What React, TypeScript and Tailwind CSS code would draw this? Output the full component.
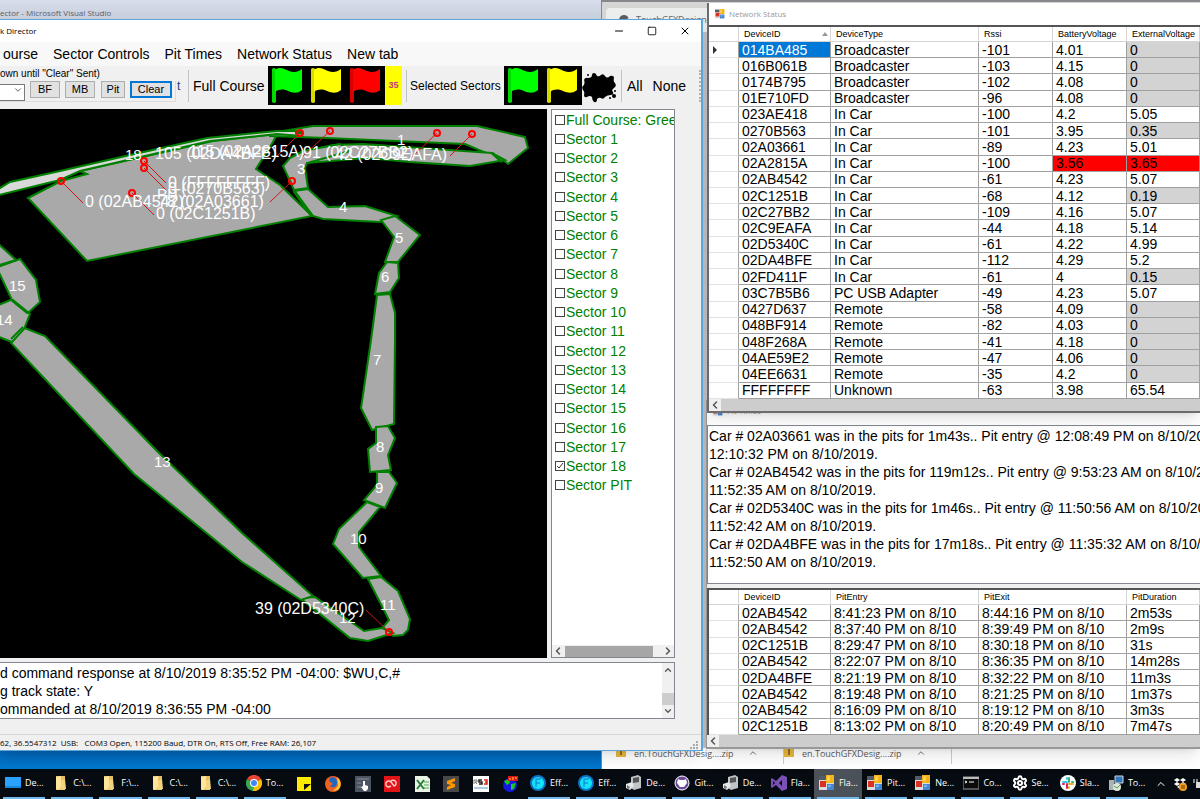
import { useState, type ReactNode } from "react";
import { ChevronDown, ChevronLeft, ChevronRight, ChevronUp, Minus, Settings, Square, X } from "lucide-react";
import clsx from "clsx";

type Device = [id: string, type: string, rssi: string, battery: string, external: string];

const devices: Device[] = [
  ["014BA485", "Broadcaster", "-101", "4.01", "0"],
  ["016B061B", "Broadcaster", "-103", "4.15", "0"],
  ["0174B795", "Broadcaster", "-102", "4.08", "0"],
  ["01E710FD", "Broadcaster", "-96", "4.08", "0"],
  ["023AE418", "In Car", "-100", "4.2", "5.05"],
  ["0270B563", "In Car", "-101", "3.95", "0.35"],
  ["02A03661", "In Car", "-89", "4.23", "5.01"],
  ["02A2815A", "In Car", "-100", "3.56", "3.65"],
  ["02AB4542", "In Car", "-61", "4.23", "5.07"],
  ["02C1251B", "In Car", "-68", "4.12", "0.19"],
  ["02C27BB2", "In Car", "-109", "4.16", "5.07"],
  ["02C9EAFA", "In Car", "-44", "4.18", "5.14"],
  ["02D5340C", "In Car", "-61", "4.22", "4.99"],
  ["02DA4BFE", "In Car", "-112", "4.29", "5.2"],
  ["02FD411F", "In Car", "-61", "4", "0.15"],
  ["03C7B5B6", "PC USB Adapter", "-49", "4.23", "5.07"],
  ["0427D637", "Remote", "-58", "4.09", "0"],
  ["048BF914", "Remote", "-82", "4.03", "0"],
  ["048F268A", "Remote", "-41", "4.18", "0"],
  ["04AE59E2", "Remote", "-47", "4.06", "0"],
  ["04EE6631", "Remote", "-35", "4.2", "0"],
  ["FFFFFFFF", "Unknown", "-63", "3.98", "65.54"],
];

const pitStops = [
  ["02AB4542", "8:41:23 PM on 8/10", "8:44:16 PM on 8/10", "2m53s"],
  ["02AB4542", "8:37:40 PM on 8/10", "8:39:49 PM on 8/10", "2m9s"],
  ["02C1251B", "8:29:47 PM on 8/10", "8:30:18 PM on 8/10", "31s"],
  ["02AB4542", "8:22:07 PM on 8/10", "8:36:35 PM on 8/10", "14m28s"],
  ["02DA4BFE", "8:21:19 PM on 8/10", "8:32:22 PM on 8/10", "11m3s"],
  ["02AB4542", "8:19:48 PM on 8/10", "8:21:25 PM on 8/10", "1m37s"],
  ["02AB4542", "8:16:09 PM on 8/10", "8:19:12 PM on 8/10", "3m3s"],
  ["02C1251B", "8:13:02 PM on 8/10", "8:20:49 PM on 8/10", "7m47s"],
];

const pitMessages = `Car # 02A03661 was in the pits for 1m43s.. Pit entry @ 12:08:49 PM on 8/10/2019
12:10:32 PM on 8/10/2019.
Car # 02AB4542 was in the pits for 119m12s.. Pit entry @ 9:53:23 AM on 8/10/2019
11:52:35 AM on 8/10/2019.
Car # 02D5340C was in the pits for 1m46s.. Pit entry @ 11:50:56 AM on 8/10/2019
11:52:42 AM on 8/10/2019.
Car # 02DA4BFE was in the pits for 17m18s.. Pit entry @ 11:35:32 AM on 8/10/2019
11:52:50 AM on 8/10/2019.`;

const logText = `d command response at 8/10/2019 8:35:52 PM -04:00: $WU,C,#
g track state: Y
ommanded at 8/10/2019 8:36:55 PM -04:00`;

const sectorNames = [
  "Full Course: Green",
  ...Array.from({ length: 18 }, (_, i) => `Sector ${i + 1}`),
  "Sector PIT",
];

const trackShapes = [
  "28,198 61,181 87,174 80,171 213,141 277,134 273,142 256,169 280,185 312,216 87,261",
  "327,138 270,136 270,133 313,126 477,126 525,137 528,148 508,164 503,160 465,144",
  "303,152 333,145 363,144 492,153 505,160 470,166 410,162 367,158 307,163",
  "283,166 290,158 303,151 340,144 350,151 307,163 305,168 308,188 294,190",
  "294,191 308,189 328,207 365,206 397,216 380,222 323,219 313,216",
  "395,216 420,235 398,262 385,262 394,237 381,220",
  "387,262 398,263 399,278 390,292 375,294 379,273",
  "377,295 390,294 395,313 395,340 394,424 372,430 361,408 371,340",
  "376,427 388,426 395,438 388,455 391,470 370,472 368,449 376,443",
  "377,472 389,472 397,483 385,508 364,500 377,485",
  "367,502 380,507 359,532 359,547 381,576 363,578 333,544 339,529",
  "368,579 381,577 398,591 410,619 408,630 403,635 393,636 388,632 383,627 389,620",
  "300,598 315,597 364,631 382,628 393,633 368,641 350,638",
  "22,327 45,336 158,452 242,533 313,596 301,600 242,562 134,474 11,343",
  "-9,308 13,299 30,314 24,329 12,342 -9,334",
  "-5,268 20,259 36,280 40,302 28,313 12,300 -5,264",
  "-8,238 16,260 -8,267",
];

const trackLabels: [string, number, number][] = [
  ["18", 125, 160], ["1", 397, 145], ["3", 297, 174], ["4", 339, 212], ["5", 395, 243],
  ["6", 381, 282], ["7", 373, 365], ["8", 376, 452], ["9", 375, 493], ["10", 350, 544],
  ["11", 380, 610], ["12", 339, 623], ["13", 154, 467], ["14", -4, 325], ["15", 9, 291],
  ["PIT", 157, 199],
];

const cars: [string, number, number, number, number][] = [
  // label, label x/y, marker x/y
  ["105 (02DA4BFE)", 155, 159, 330, 131],
  ["115 (02A2815A)", 189, 157, 300, 133],
  ["91 (02C27BB2)", 303, 158, 437, 133],
  ["42 (02C9EAFA)", 335, 160, 472, 134],
  ["0 (FFFFFFFF)", 168, 188, 144, 161],
  ["0 (0270B563)", 168, 194, 144, 168],
  ["78 (02A03661)", 158, 207, 292, 181],
  ["0 (02AB4542)", 85, 207, 61, 181],
  ["0 (02C1251B)", 156, 219, 132, 193],
  ["39 (02D5340C)", 255, 614, 389, 632],
];

const leaders = [
  "300,133 277,156", "330,131 302,157", "437,133 411,158", "472,134 450,156", "144,161 166,183",
  "144,168 166,190", "292,181 270,202", "61,181 83,203", "132,193 154,215", "389,632 366,610",
];

function TrackMap() {
  return (
    <svg viewBox="0 109 547 548" preserveAspectRatio="xMinYMin meet" className="h-full w-full" aria-label="Track map">
      <g fill="#a9a9a9" stroke="#008000" strokeWidth="2">
        {trackShapes.map((points) => <polygon key={points} points={points} />)}
        <polygon fill="#d9d9d9" points="-5,191 10,182 60,171 130,155 207,138 277,131 302,131 302,136 277,134 210,141 80,171 60,180 -5,196" />
      </g>
      <path d="M294 191l18 25M295 133h8M492 153l10 9M12 300l16 13" stroke="#008000" strokeWidth="3" />
      <path d="M11 339l12-12" stroke="#008000" strokeWidth="2" />
      <g fill="none" stroke="#d01818" strokeWidth="1">
        {leaders.map((points) => <polyline key={points} points={points} />)}
      </g>
      <g fill="none" stroke="#ff0000" strokeWidth="2">
        {cars.map(([label, , , x, y]) => <circle key={label} cx={x} cy={y} r="3" />)}
      </g>
      <g fill="#ffffff" className="font-['Liberation_Sans',sans-serif]">
        {trackLabels.map(([label, x, y]) => <text key={label} x={x} y={y} fontSize="15">{label}</text>)}
        {cars.map(([label, x, y]) => <text key={label} x={x} y={y} fontSize="16">{label}</text>)}
      </g>
    </svg>
  );
}

function Flag({ color, label }: { color: string; label: string }) {
  return (
    <button type="button" aria-label={label} className="h-[39px] w-[39px] bg-black">
      <svg viewBox="0 0 39 39" className="size-full">
        <path d="M4 3q2-2 4 0v33q-2 2-4 0z" fill={color} opacity=".85" />
        <path d="M7 4c5-4 9-1 14 1s9 1 13-2v21c-5 4-9 3-14 1s-9-2-13 1z" fill={color} />
      </svg>
    </button>
  );
}

function FormIcon({ className }: { className?: string }) {
  return (
    <svg viewBox="0 0 16 16" className={className}>
      <path fill="#d8dbe0" d="M0 1h15v14H0z" />
      <path fill="#555b66" d="M0 1h7v4H0z" />
      <path fill="#f7b417" d="M7 0h8v8H7z" />
      <path fill="#d8321f" d="M1 6h6v6H1z" />
      <path fill="#4386d8" d="M8 9h7v6H8z" />
      <path fill="#fbd05a" d="M8 1h3v5H8z" />
      <path fill="#7fb0ee" d="M9 10h3v2H9z" />
    </svg>
  );
}

function FolderIcon() {
  return (
    <svg viewBox="0 0 16 16" className="size-4">
      <path fill="#e8bf62" d="M3 1h9v14H3z" />
      <path fill="#ffe49c" d="M3 2l5-1v11l-2 3-3-1z" />
      <path fill="#f4d57f" d="M8 6l4-2 1 10-5 1z" />
    </svg>
  );
}

function ChromeIcon() {
  return (
    <svg viewBox="0 0 16 16" className="size-4">
      <path fill="#ea4335" d="M8 8L1 4a8 8 0 0 1 14 0z" />
      <path fill="#34a853" d="M8 8L1 4a8 8 0 0 0 6 12z" />
      <path fill="#fbbc05" d="M8 8l7-4a8 8 0 0 1-8 12z" />
      <circle cx="8" cy="8" r="4" fill="#fff" />
      <circle cx="8" cy="8" r="3" fill="#4285f4" />
    </svg>
  );
}

function EffIcon() {
  return (
    <svg viewBox="0 0 16 16" className="size-4">
      <circle cx="8" cy="8" r="8" fill="#1173c7" />
      <circle cx="8" cy="8" r="6" fill="#12e5fb" />
      <path d="M6 4h5M6 4v8M6 8h4" stroke="#1173c7" fill="none" />
    </svg>
  );
}

function DeviceIcon() {
  return (
    <svg viewBox="0 0 16 16" className="size-4">
      <path fill="#bfc4c6" d="M5 2l7-2 3 2v11l-7 2-3-2z" />
      <path fill="#555" d="M7 3l6-1v5l-6 1z" />
      <path fill="#e5e7e8" d="M0 9l6-2 2 4-4 4-4-2z" />
      <path fill="#777" d="M1 10l3 2-1 2-2-1z" />
    </svg>
  );
}

const desktopIcon = <svg viewBox="0 0 16 16" className="size-4"><path fill="#29a3ff" d="M0 2h16v11H0z" /><path d="M0 12h16" stroke="#0866b4" /></svg>;
const consoleIcon = <svg viewBox="0 0 16 16" className="size-4"><path fill="#0b0b0b" stroke="#999" d="M0 2h16v12H0z" /><path fill="#bbb" d="M0 2h16v2H0z" /><path d="M2 6l2 1-2 1M6 7h5" stroke="#fff" fill="none" /></svg>;
const gitIcon = <svg viewBox="0 0 16 16" className="size-4"><circle cx="8" cy="8" r="7" fill="#6d4a9c" stroke="#fff" /><path fill="#fff" d="M4 4l2 1h4l2-1 1 4-3 4H6L3 8z" /></svg>;
const vsIcon = <svg viewBox="0 0 16 16" className="size-4"><path fill="#7a50b5" fillRule="evenodd" d="M11 0l5 2v12l-5 2-6-6-4 3-1-1V4l1-1 4 3zm0 5L8 8l3 3zM2 6v4l2-2z" /></svg>;
const slackIcon = <svg viewBox="0 0 16 16" className="size-4"><circle cx="8" cy="8" r="8" fill="#fff" /><g strokeWidth="2" strokeLinecap="round"><path d="M3 7h4M7 3v1" stroke="#36c5f0" /><path d="M9 3v4M12 7h1" stroke="#2eb67d" /><path d="M9 9h4M9 12v1" stroke="#ecb22e" /><path d="M7 9v4M3 9h1" stroke="#e01e5a" /></g></svg>;
const setupIcon = <svg viewBox="0 0 16 16" className="size-4"><path fill="#3278b8" stroke="#c8d6df" d="M7 1h8v7H7z" /><path fill="#aab2b5" d="M1 5h5v10H1z" /><circle cx="9" cy="12" r="4" fill="#dfe7da" /><path d="M6 11l3 2 3-3" stroke="#4d9d48" fill="none" /></svg>;

const pinned: { name: string; icon: ReactNode }[] = [
  { name: "Sticky Notes", icon: <svg viewBox="0 0 16 16" className="size-4"><path fill="#ffec00" d="M1 1h14v14H1z" /><path fill="#111" d="M8 8h7l-7 6z" /></svg> },
  { name: "Firefox", icon: <svg viewBox="0 0 16 16" className="size-4"><circle cx="8" cy="8" r="8" fill="#f0611f" /><path fill="#ffc532" d="M12 1c4 3 5 9 1 13l-5 1 5-5z" /><path fill="#2168c5" d="M5 2c4-2 8 1 7 6-1 4-5 4-7 2l3-2-4-3z" /></svg> },
  { name: "Touch", icon: <svg viewBox="0 0 16 16" className="size-4"><path fill="#4b5260" d="M0 0h16v16H0z" /><path d="M2 3h12M2 7h4M2 11h4" stroke="#8a8fa0" /><path fill="#fff" d="M8 5h2v4l3 1v3l-2 2H9l-3-4 2-1z" /></svg> },
  { name: "Creative Cloud", icon: <svg viewBox="0 0 16 16" className="size-4"><path fill="#e01418" d="M0 0h16v16H0z" /><path d="M7 10l-2 1a3 3 0 1 1 2-5l3 4a3 3 0 1 0-3-5" stroke="#ffc7c7" strokeWidth="1.5" fill="none" /></svg> },
  { name: "Excel", icon: <svg viewBox="0 0 16 16" className="size-4"><path fill="#e9f4e6" d="M1 0h12l3 3v13H1z" /><path d="M10 6h5M10 9h5M10 12h5" stroke="#55a55b" /><path d="M3 4l7 9M10 4l-7 9" stroke="#23823c" strokeWidth="2" /></svg> },
  { name: "Sublime Text", icon: <svg viewBox="0 0 16 16" className="size-4"><path fill="#484848" d="M0 0h16v16H0z" /><path fill="#ff9800" d="M4 5l8-3v3L8 7l4 1v3l-8 3v-3l4-2-4-1z" /></svg> },
  { name: "RS3", icon: <svg viewBox="0 0 16 16" className="size-4"><path fill="#fff" d="M0 0h16v16H0z" /><path d="M1 8V4h3v2H2l2 2" stroke="#777" fill="none" /><path d="M9 4H6v2h3v2H6" stroke="#222" fill="none" strokeWidth="1.5" /><path d="M11 4h3v4h-3M12 6h2" stroke="#d21" fill="none" strokeWidth="1.5" /><path d="M1 12h14" stroke="#5b94c9" /></svg> },
  { name: "World time", icon: <svg viewBox="0 0 16 16" className="size-4"><circle cx="8" cy="9" r="7" fill="#1418e0" /><path fill="#19c91f" d="M2 5l5-2 1 4-3 2zM9 8l5-1-2 6-3 1z" /><path fill="#d81717" d="M6 0h10v5H6z" /><path d="M8 2v2M11 1v3M13 2h2" stroke="#ffd23b" /></svg> },
];

const leftTasks = [
  { label: "De...", icon: desktopIcon },
  { label: "C:\\...", icon: <FolderIcon /> },
  { label: "F:\\...", icon: <FolderIcon /> },
  { label: "C:\\...", icon: <FolderIcon /> },
  { label: "C:\\...", icon: <FolderIcon /> },
  { label: "To...", icon: <ChromeIcon /> },
];

const rightTasks = [
  { label: "Eff...", icon: <EffIcon /> },
  { label: "Eff...", icon: <EffIcon /> },
  { label: "De...", icon: <DeviceIcon /> },
  { label: "Git...", icon: gitIcon },
  { label: "De...", icon: <DeviceIcon /> },
  { label: "Fla...", icon: vsIcon },
  { label: "Fla...", icon: <FormIcon className="size-4" />, active: true },
  { label: "Pit...", icon: <FormIcon className="size-4" /> },
  { label: "Ne...", icon: <FormIcon className="size-4" /> },
  { label: "Co...", icon: consoleIcon },
  { label: "Se...", icon: <Settings className="size-4 text-white" strokeWidth={3} /> },
  { label: "Sla...", icon: slackIcon },
  { label: "To...", icon: setupIcon },
];

function TaskButton({ label, icon, active }: { label: string; icon: ReactNode; active?: boolean }) {
  return (
    <button type="button" className={clsx("flex min-w-0 flex-1 flex-col px-[3px]", active && "bg-[#4a5158]")}>
      <span className="flex w-full flex-1 items-center gap-1 border-b-2 border-[#76b9ed] pl-0.5 whitespace-nowrap">
        <span className="shrink-0">{icon}</span>
        <span className="text-[9px] text-white">{label}</span>
      </span>
    </button>
  );
}

function Taskbar() {
  return (
    <footer className="grid h-[30px] shrink-0 grid-cols-[289fr_236fr_626fr_49fr] overflow-hidden bg-[#060b12]">
      <div className="flex min-w-0">
        {leftTasks.map((task, i) => <TaskButton key={i} {...task} />)}
      </div>
      <div className="flex min-w-0">
        {pinned.map(({ name, icon }) => (
          <button key={name} type="button" aria-label={name} className="flex flex-1 items-center justify-center">{icon}</button>
        ))}
      </div>
      <div className="flex min-w-0">
        {rightTasks.map((task, i) => <TaskButton key={i} {...task} />)}
      </div>
      <div className="flex min-w-0 items-center gap-1.5 overflow-hidden pl-1 text-white">
        <ChevronUp className="size-3 shrink-0" />
        <svg viewBox="0 0 14 14" className="size-3.5 shrink-0">
          <path fill="#fff" d="M1 3l3-2 3 2-3 2zM7 3l3-2 3 2-3 2zM1 7l3-2 3 2-3 2zM7 7l3-2 3 2-3 2zM4 10l3-2 3 2-3 2z" />
          <circle cx="10" cy="10" r="4" fill="#f5a11c" />
          <path d="M9 8v4M11 8v4" stroke="#5a3a05" />
        </svg>
        <svg viewBox="0 0 14 14" className="size-3.5 shrink-0"><path fill="#ddd" d="M3 5h11v6H3z" /><path d="M1 2v4M4 2v3" stroke="#fff" /></svg>
      </div>
    </footer>
  );
}

function Background() {
  return (
    <div className="absolute inset-0 flex bg-[#0078d7]">
      <div className="flex w-[601px] shrink-0 flex-col justify-between">
        <p className="h-[19px] overflow-hidden bg-linear-to-b from-[#d8deec] to-[#c6cddb] pt-2 text-[8px] leading-[10px] whitespace-nowrap text-[#5c6068]">
          ector - Microsoft Visual Studio
        </p>
        <div className="h-[18px] bg-linear-to-b from-[#0064b4] to-[#0078d0]" />
      </div>
      <div className="flex min-w-0 flex-1 flex-col justify-between border-t-2 border-l border-[#85878a] bg-[#bfc2c6]">
        <div className="flex h-[30px] bg-[#d5d5d6] pt-1.5 pl-1">
          <div className="flex items-center gap-1.5 rounded-t bg-[#eceded] px-3 text-[9px] text-[#61656a]">
            <svg viewBox="0 0 12 12" className="size-3"><circle cx="6" cy="6" r="5" fill="#585c61" /><path fill="#ddd" d="M6 6l5-2v4l-3 3z" /></svg>
            TouchGFXDesigner
          </div>
        </div>
        <div className="flex h-[21px] items-start bg-white pl-3.5 text-[9px] leading-[11px] text-[#5b5b5b]">
          {[0, 1].map((n) => (
            <button key={n} type="button" className="flex h-4 w-[168px] items-start gap-2 border-r border-[#ccc]">
              <svg viewBox="0 0 10 10" className="size-2.5"><path fill="#e6b83d" d="M0 0h10v9H0z" /><path fill="#9c6a20" d="M4 1h2v6H4z" /></svg>
              <span className="w-[106px] text-left whitespace-nowrap">en.TouchGFXDesig....zip</span>
              <ChevronUp className="size-2.5" />
            </button>
          ))}
        </div>
      </div>
    </div>
  );
}

const smallButton = "h-[17px] border border-[#adadad] bg-[#e1e1e1] text-[11px] leading-[15px] text-black";

function Toolbar() {
  return (
    <div className="flex h-[39px] items-center overflow-hidden bg-[#f0f0f0] text-sm whitespace-nowrap">
      <fieldset className="h-full w-[177px] shrink-0">
        <legend className="h-[15px] text-[10px] leading-[15px]">own until "Clear" Sent)</legend>
        <div className="mr-px flex h-[21px] items-start border-r border-b border-[#dcdcdc]">
          <div className="relative mr-[5px] h-[17px] w-[25px]">
            <select aria-label="Command" className="size-full appearance-none border-y border-r border-[#7a7a7a] bg-white text-[11px]">
              <option />
            </select>
            <ChevronDown className="pointer-events-none absolute top-1 right-0.5 size-2.5 text-[#444]" />
          </div>
          <button type="button" className={`${smallButton} mr-[5px] w-[30px]`}>BF</button>
          <button type="button" className={`${smallButton} mr-[6px] w-[30px]`}>MB</button>
          <button type="button" className={`${smallButton} mr-[5px] w-[24px]`}>Pit</button>
          <button type="button" className="h-[17px] w-[42px] border-2 border-[#0078d7] bg-[#e1e1e1] text-[11px] leading-[13px]">Clear</button>
        </div>
      </fieldset>
      <span className="w-[11px] shrink-0 text-xs text-[#1c3f78]">t</span>
      <div className="h-8 w-px shrink-0 bg-[#c4c4c4]" />
      <span className="w-[79px] shrink-0 pl-1">Full Course</span>
      <div className="flex shrink-0">
        <Flag color="#00ff00" label="Full course green" />
        <Flag color="#ffff00" label="Full course yellow" />
        <Flag color="#ff0000" label="Full course red" />
        <button type="button" className="w-[17px] bg-[#ffff00] text-[9px] font-bold text-[#c23a7c]">35</button>
      </div>
      <div className="ml-1 h-8 w-px shrink-0 bg-[#c4c4c4]" />
      <span className="w-[97px] shrink-0 pl-[3px] text-xs">Selected Sectors</span>
      <div className="flex shrink-0">
        <Flag color="#00ff00" label="Selected sectors green" />
        <Flag color="#ffff00" label="Selected sectors yellow" />
      </div>
      <button type="button" aria-label="Oil" className="h-9 w-9 shrink-0">
        <svg viewBox="0 0 36 36" className="size-full">
          <path d="M12 5q2 0 3 3 2 1 4-1t4 1q2 3 5 0 4-1 4 2-1 3 1 5 2 3-1 5-3 2-1 4 1 3-2 3-4 0-6 2-2 3-4 1-2-1-4 1 0 4-3 3-2-2-2-5-2-2-5 0-3 1-3-2 1-3-1-5-2-3 1-5 1-3 0-5 1-3 4-2 4 0 4-3 0-2 2-2z" />
          <circle cx="33" cy="23" r="1" /><circle cx="32" cy="28" r="2" /><circle cx="28" cy="30" r="1" /><circle cx="6" cy="7" r="1" />
        </svg>
      </button>
      <div className="ml-[3px] h-8 w-px shrink-0 bg-[#c4c4c4]" />
      <button type="button" className="ml-[5px] shrink-0">All</button>
      <button type="button" className="ml-2.5 shrink-0">None</button>
      <div className="ml-auto h-8 border-l-2 border-dotted border-[#b4b4b4]" />
    </div>
  );
}

function SectorList() {
  const [checked, setChecked] = useState(["Sector 18"]);

  function toggle(name: string) {
    setChecked((prev) => (prev.includes(name) ? prev.filter((n) => n !== name) : [...prev, name]));
  }

  return (
    <div className="flex w-[124px] shrink-0 flex-col border border-[#828790] bg-white">
      <ul className="flex h-[385px] flex-col overflow-hidden text-sm whitespace-nowrap text-[#008000]">
        {sectorNames.map((name) => (
          <li key={name} className="flex flex-1 items-center">
            <label className="relative flex items-center gap-px pl-[3px] leading-4">
              <input
                type="checkbox"
                checked={checked.includes(name)}
                onChange={() => toggle(name)}
                className="size-[10px] shrink-0 appearance-none border border-[#444] bg-white"
              />
              {checked.includes(name) && (
                <svg viewBox="0 0 10 10" className="pointer-events-none absolute left-[3px] size-[10px]"><path d="M2 5l2 2 4-5" stroke="#333" fill="none" /></svg>
              )}
              {name}
            </label>
          </li>
        ))}
      </ul>
      <div className="mt-auto flex h-3 items-center bg-[#f0f0f0] text-[#555]">
        <ChevronLeft className="size-3 shrink-0" strokeWidth={3} />
        <div className="ml-px h-[11px] w-[88px] bg-[#a6a6a6]" />
        <ChevronRight className="ml-auto size-3 shrink-0" strokeWidth={3} />
      </div>
    </div>
  );
}

const tabs = ["Sector Controls", "Pit Times", "Network Status", "New tab"];

function DirectorWindow() {
  return (
    <section className="absolute top-[19px] bottom-[18px] left-0 flex w-[703px] flex-col border-t border-r-2 border-b border-[#5ba7dd] bg-[#f0f0f0] shadow-lg">
      <header className="flex h-[22px] shrink-0 items-center bg-white font-['Open_Sans',sans-serif] text-[8px]">
        <h1>k Director</h1>
        <div className="ml-auto flex items-center gap-[22px] pr-2.5">
          <button type="button" aria-label="Minimize"><Minus className="size-3" strokeWidth={2} /></button>
          <button type="button" aria-label="Maximize"><Square className="size-2.5" strokeWidth={2} /></button>
          <button type="button" aria-label="Close"><X className="size-3" strokeWidth={2} /></button>
        </div>
      </header>
      <nav className="flex h-6 shrink-0 items-center gap-[15px] bg-[#f8f8f8] pl-[3px] text-sm whitespace-nowrap">
        <button type="button">ourse</button>
        {tabs.map((tab) => <button key={tab} type="button">{tab}</button>)}
      </nav>
      <Toolbar />
      <div className="mt-1 flex min-h-0 flex-1 gap-1">
        <div className="w-[547px] shrink-0 bg-black">
          <TrackMap />
        </div>
        <SectorList />
      </div>
      <div className="mt-1 mr-[26px] flex h-[57px] shrink-0 border border-l-0 border-[#828790] bg-white">
        <textarea
          aria-label="Log"
          readOnly
          wrap="off"
          defaultValue={logText}
          className="min-w-0 flex-1 resize-none overflow-hidden pt-px text-sm leading-[18px]"
        />
        <div className="flex w-3 flex-col items-center justify-between bg-[#f0f0f0] py-0.5 text-[#555]">
          <ChevronUp className="size-2.5" strokeWidth={3} />
          <div className="mt-auto mb-px h-3 w-full bg-[#cdcdcd]" />
          <ChevronDown className="size-2.5" strokeWidth={3} />
        </div>
      </div>
      <p className="mt-[15px] flex h-4 shrink-0 items-center border-t border-[#d7d7d7] font-['Open_Sans',sans-serif] text-[8px] whitespace-pre">
        {"62, 36.5547312  USB:   COM3 Open, 115200 Baud, DTR On, RTS Off, Free RAM: 26,107"}
        <svg viewBox="0 0 10 10" className="mt-1 mr-0.5 ml-auto size-2.5"><path fill="#aaa" d="M7 1h2v2H7zM7 4h2v2H7zM7 7h2v2H7zM4 4h2v2H4zM4 7h2v2H4zM1 7h2v2H1z" /></svg>
      </p>
    </section>
  );
}

const headCell = "h-[15px] border-r border-b border-[#d5d5d5] pl-[5px] text-left text-[9px] leading-[14px] font-normal";
const cell = "overflow-hidden border-r border-b border-[#a0a0a0] pl-[3px] leading-[14px]";

function HorizontalScroll() {
  return (
    <div className="flex h-3 items-center bg-[#f0f0f0] text-[#555]">
      <ChevronLeft className="size-3" strokeWidth={3} />
      <div className="h-full flex-1 bg-[#cdcdcd]" />
    </div>
  );
}

function NetworkWindow() {
  return (
    <section className="absolute top-[3px] right-0 left-[707px] border-b-2 border-l-2 border-[#6c6c6c] bg-white shadow-lg">
      <header className="flex h-[22px] items-center gap-1 pl-1.5 font-['Open_Sans',sans-serif] text-[8px] text-[#999]">
        <FormIcon className="size-2.5" />
        <h2>Network Status</h2>
      </header>
      <table className="h-[374px] w-full table-fixed border-separate border-spacing-0 border-t-2 border-[#555] text-sm whitespace-nowrap">
        <colgroup>
          <col className="w-[30px]" /><col className="w-[92px]" /><col className="w-[148px]" /><col className="w-[74px]" /><col className="w-[74px]" /><col />
        </colgroup>
        <thead>
          <tr>
            <th className={headCell} />
            <th className={headCell}>
              <span className="flex items-center justify-between pr-0.5">
                DeviceID
                <svg viewBox="0 0 6 4" className="h-1 w-1.5"><path d="M3 0l3 4H0z" fill="#999" /></svg>
              </span>
            </th>
            <th className={headCell}>DeviceType</th>
            <th className={headCell}>Rssi</th>
            <th className={headCell}>BatteryVoltage</th>
            <th className={headCell}>ExternalVoltage</th>
          </tr>
        </thead>
        <tbody>
          {devices.map(([id, type, rssi, battery, external], i) => {
            const isLow = battery === "3.56";
            return (
              <tr key={id}>
                <td className="border-r border-b border-r-[#a0a0a0] border-b-[#e3e3e3] pl-1">
                  {i === 0 && <svg viewBox="0 0 4 8" className="h-2 w-1"><path d="M0 0l4 4-4 4z" fill="#333" /></svg>}
                </td>
                <td className={clsx(cell, i === 0 && "bg-[#0078d7] text-white")}>{id}</td>
                <td className={cell}>{type}</td>
                <td className={cell}>{rssi}</td>
                <td className={clsx(cell, isLow && "bg-[#ff0000]")}>{battery}</td>
                <td className={clsx(cell, isLow && "bg-[#ff0000]", Number(external) < 1 && "bg-[#d3d3d3]")}>{external}</td>
              </tr>
            );
          })}
        </tbody>
      </table>
      <HorizontalScroll />
    </section>
  );
}

function PitWindow() {
  return (
    <section className="absolute top-[400px] right-0 left-[706px] border-b-2 border-l border-[#999] bg-[#f0f0f0] shadow-lg">
      <header className="flex h-[25px] items-start gap-1 bg-white pt-1.5 pl-1.5 font-['Open_Sans',sans-serif] text-[8px] leading-[10px] text-[#999]">
        <FormIcon className="size-2.5" />
        <h2>Pit Times</h2>
      </header>
      <textarea
        aria-label="Pit messages"
        readOnly
        wrap="off"
        defaultValue={pitMessages}
        className="block h-[159px] w-full resize-none overflow-hidden border border-r-0 border-[#828790] bg-white pt-px pl-px text-sm leading-[18px]"
      />
      <table className="mt-1 h-[147px] w-full table-fixed border-separate border-spacing-0 border-t-2 border-l-2 border-[#555] bg-white text-sm whitespace-nowrap">
        <colgroup>
          <col className="w-[30px]" /><col className="w-[92px]" /><col className="w-[148px]" /><col className="w-[148px]" /><col />
        </colgroup>
        <thead>
          <tr>
            <th className={headCell} />
            <th className={headCell}>DeviceID</th>
            <th className={headCell}>PitEntry</th>
            <th className={headCell}>PitExit</th>
            <th className={headCell}>PitDuration</th>
          </tr>
        </thead>
        <tbody>
          {pitStops.map((row) => (
            <tr key={row[1]}>
              <td className="border-r border-b border-r-[#a0a0a0] border-b-[#e3e3e3]" />
              {row.map((value, i) => <td key={i} className={cell}>{value}</td>)}
            </tr>
          ))}
        </tbody>
      </table>
      <HorizontalScroll />
    </section>
  );
}

export default function App() {
  return (
    <div className="flex h-screen flex-col overflow-hidden font-['Liberation_Sans',Arial,sans-serif] text-black">
      <main className="relative min-h-0 flex-1 overflow-hidden">
        <div className="font-['Open_Sans',sans-serif]">
          <Background />
        </div>
        <PitWindow />
        <NetworkWindow />
        <DirectorWindow />
      </main>
      <div className="font-['Open_Sans',sans-serif]">
        <Taskbar />
      </div>
    </div>
  );
}
